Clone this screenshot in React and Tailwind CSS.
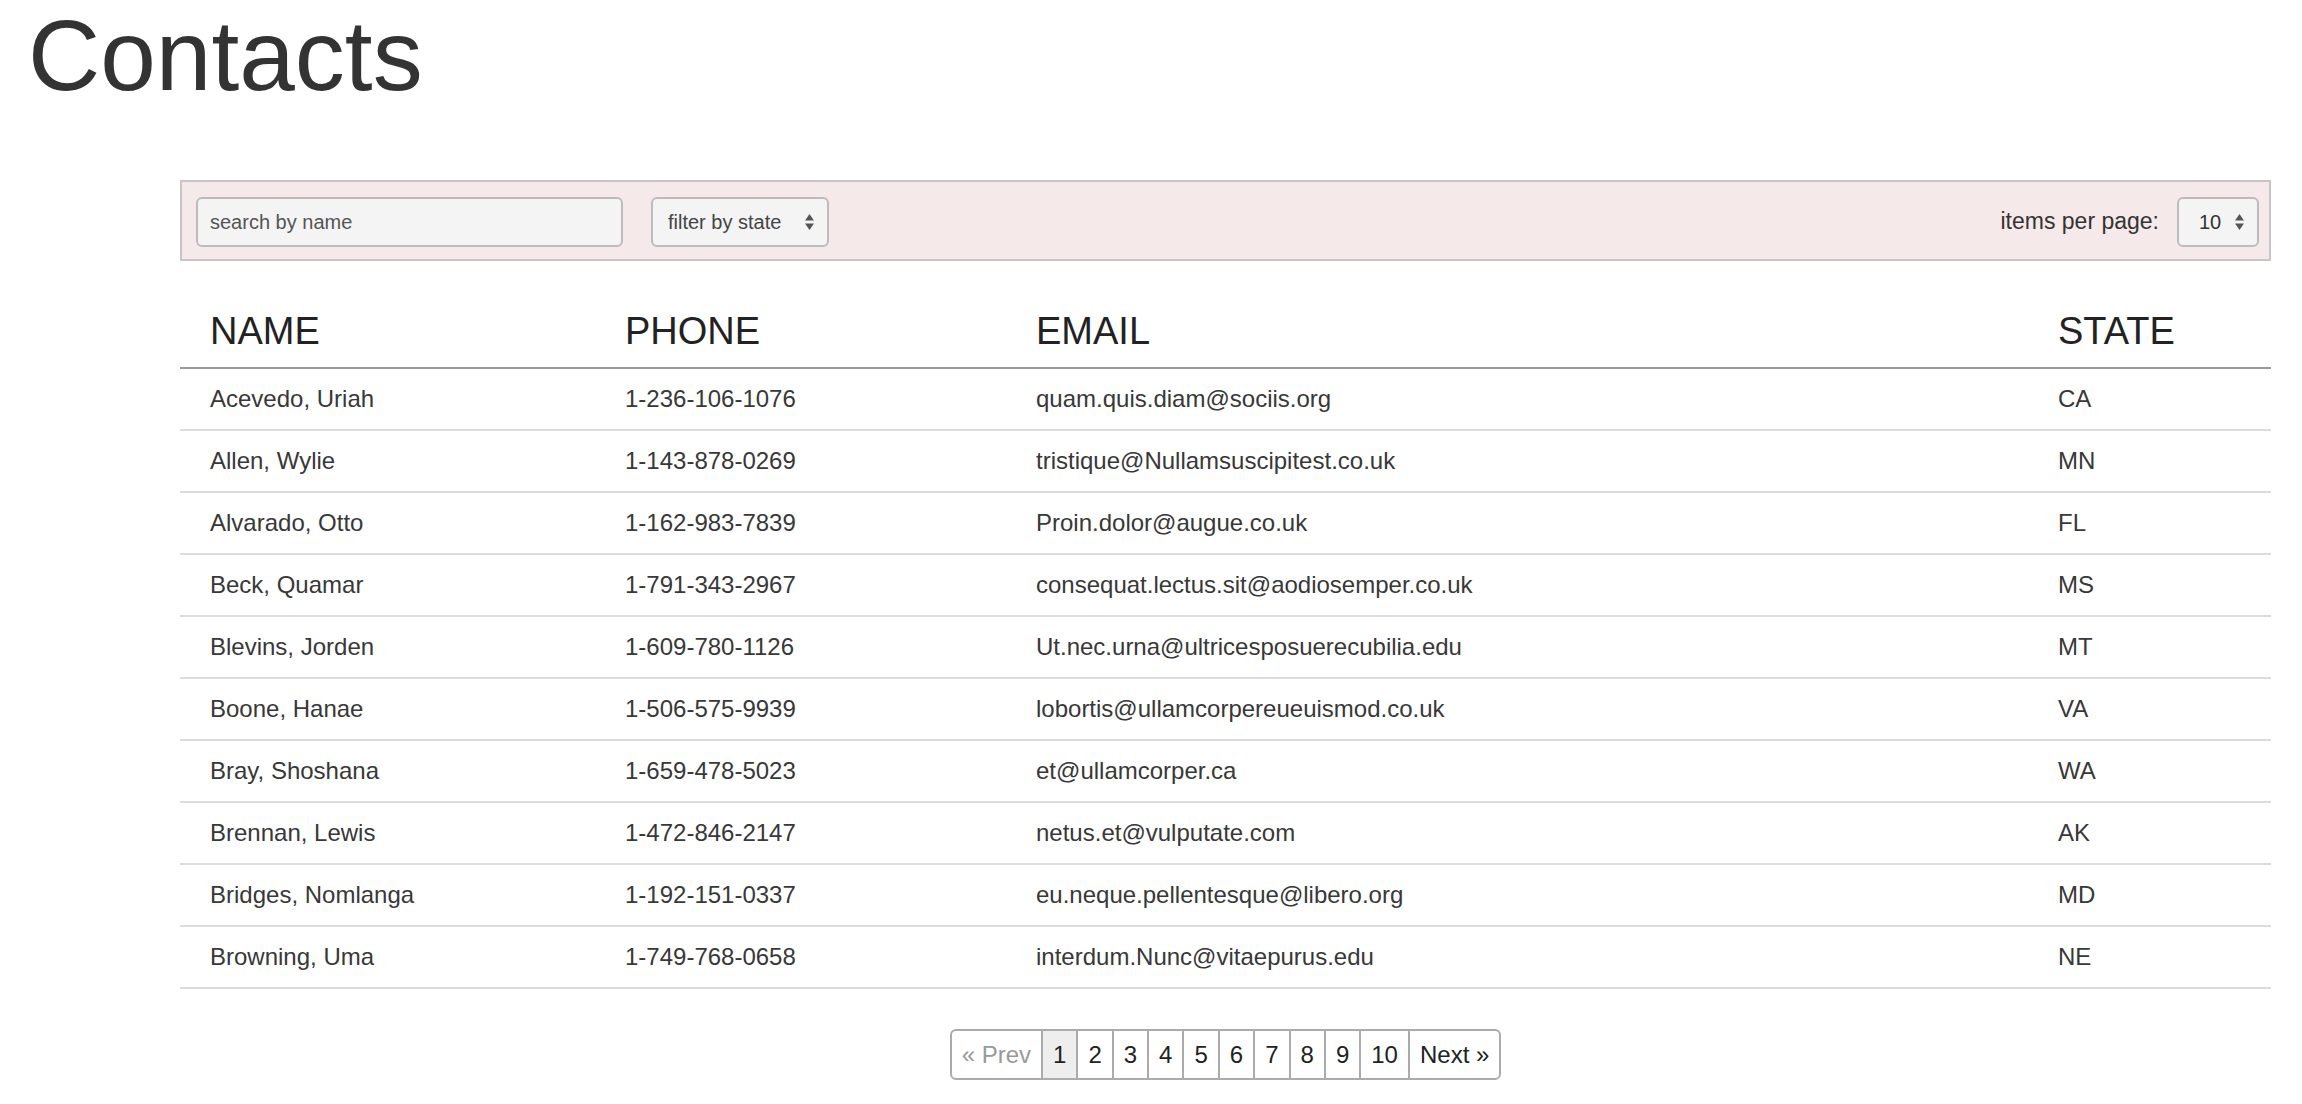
import React from "react";

const rows = [
  ["Acevedo, Uriah", "1-236-106-1076", "quam.quis.diam@sociis.org", "CA"],
  ["Allen, Wylie", "1-143-878-0269", "tristique@Nullamsuscipitest.co.uk", "MN"],
  ["Alvarado, Otto", "1-162-983-7839", "Proin.dolor@augue.co.uk", "FL"],
  ["Beck, Quamar", "1-791-343-2967", "consequat.lectus.sit@aodiosemper.co.uk", "MS"],
  ["Blevins, Jorden", "1-609-780-1126", "Ut.nec.urna@ultricesposuerecubilia.edu", "MT"],
  ["Boone, Hanae", "1-506-575-9939", "lobortis@ullamcorpereueuismod.co.uk", "VA"],
  ["Bray, Shoshana", "1-659-478-5023", "et@ullamcorper.ca", "WA"],
  ["Brennan, Lewis", "1-472-846-2147", "netus.et@vulputate.com", "AK"],
  ["Bridges, Nomlanga", "1-192-151-0337", "eu.neque.pellentesque@libero.org", "MD"],
  ["Browning, Uma", "1-749-768-0658", "interdum.Nunc@vitaepurus.edu", "NE"],
];

function Arrows() {
  return (
    <svg width="9" height="16" viewBox="0 0 9 16" className="shrink-0">
      <path d="M4.5 0 L9 6.5 L0 6.5 Z" fill="#555" />
      <path d="M0 9.5 L9 9.5 L4.5 16 Z" fill="#555" />
    </svg>
  );
}

export default function App() {
  const pages = ["1", "2", "3", "4", "5", "6", "7", "8", "9", "10"];
  return (
    <div
      className="w-[2302px] h-[1104px] bg-white overflow-hidden"
      style={{ fontFamily: '"Liberation Sans", Arial, sans-serif' }}
    >
      <div className="h-[180px] pl-[28px] pt-[5px]">
        <h1 className="text-[100px] leading-[100px] text-[#333] font-normal">Contacts</h1>
      </div>

      <div className="pl-[180px] pr-[31px]">
        {/* control bar */}
        <div className="h-[81px] border-2 border-[#c6c6c6] bg-[#f5eae9] flex items-center pl-[14px] pr-[10px]">
          <div className="w-[427px] h-[50px] mt-[2px] rounded-[6px] border-2 border-[#bcbcbc] bg-[#f4f4f4] flex items-center pl-[12px] text-[20px] text-[#555]">
            search by name
          </div>
          <div className="ml-[28px] w-[178px] h-[50px] mt-[2px] rounded-[6px] border-2 border-[#bcbcbc] bg-[#f4f4f4] flex items-center pl-[15px] pr-[13px] text-[20px] text-[#444]">
            <span className="flex-1">filter by state</span>
            <Arrows />
          </div>
          <div className="ml-auto flex items-center mt-[2px]">
            <span className="text-[23px] text-[#333]">items per page:</span>
            <div className="ml-[18px] w-[82px] h-[50px] rounded-[6px] border-2 border-[#bcbcbc] bg-[#f4f4f4] flex items-center pl-[20px] pr-[13px] text-[20px] text-[#333]">
              <span className="flex-1">10</span>
              <Arrows />
            </div>
          </div>
        </div>

        {/* table */}
        <div className="grid grid-cols-[415px_411px_1022px_1fr] h-[108px] items-end pb-[17px] border-b-2 border-[#9a9a9a] text-[38px] leading-[38px] text-[#222]">
          <div className="pl-[30px]">NAME</div>
          <div className="pl-[30px]">PHONE</div>
          <div className="pl-[30px]">EMAIL</div>
          <div className="pl-[30px]">STATE</div>
        </div>
        {rows.map((r, i) => (
          <div
            key={i}
            className="grid grid-cols-[415px_411px_1022px_1fr] h-[62px] items-center border-b-2 border-[#dcdcdc] text-[24px] leading-[24px] text-[#383838]"
          >
            {r.map((c, j) => (
              <div key={j} className="pl-[30px]">{c}</div>
            ))}
          </div>
        ))}

        {/* pagination */}
        <div className="flex justify-center mt-[40px]">
          <div className="flex h-[51px] border-2 border-[#ababab] rounded-[6px] overflow-hidden text-[24px] leading-[24px] text-[#222]">
            <div className="flex items-center px-[10px] text-[#999]">« Prev</div>
            {pages.map((p, i) => (
              <div
                key={p}
                className={
                  i === 0
                    ? "flex items-center px-[10px] border-l-2 border-[#ababab] bg-[#eeeeee]"
                    : "flex items-center px-[10px] border-l-2 border-[#ababab]"
                }
              >
                {p}
              </div>
            ))}
            <div className="flex items-center px-[10px] border-l-2 border-[#ababab]">Next »</div>
          </div>
        </div>
      </div>
    </div>
  );
}
